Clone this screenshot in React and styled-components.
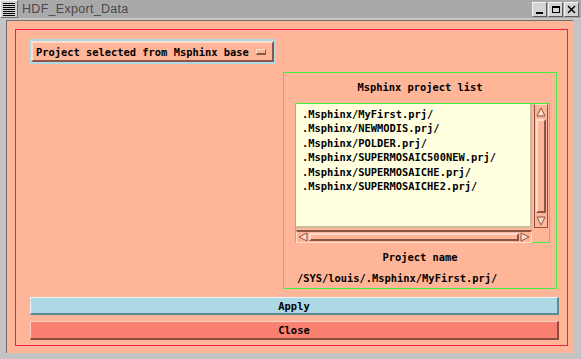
import React from "react";
import styled, { createGlobalStyle } from "styled-components";

const Global = createGlobalStyle`
  html, body { margin: 0; padding: 0; background: #ffffff; }
  body { width: 581px; height: 359px; overflow: hidden; }
`;

const SALMON = "#ffb598";
const DARK = "#8b5444";
const LIGHT = "#ffdccb";

const Window = styled.div`
  width: 581px;
  height: 359px;
  display: flex;
  flex-direction: column;
  background: #c4c4c4;
  box-sizing: border-box;
`;

const TitleBar = styled.div`
  height: 19px;
  display: flex;
  align-items: center;
  background: #a9a9a9;
  border-bottom: 1px solid #c8c8c8;
  box-sizing: border-box;
`;

const MenuBox = styled.div`
  width: 18px;
  height: 18px;
  box-sizing: border-box;
  background: #d2d2d2;
  border: 1px solid #f2f2f2;
  border-right-color: #6a6a6a;
  border-bottom-color: #6a6a6a;
  display: flex;
  flex-direction: column;
  justify-content: center;
  gap: 1px;
  padding: 0 2px;
`;

const MenuLine = styled.div`
  height: 1px;
  background: #000;
`;

const Title = styled.div`
  flex: 1;
  padding-left: 4px;
  font-family: "Liberation Sans", "DejaVu Sans", sans-serif;
  font-size: 12.5px;
  color: #4a4a4a;
  letter-spacing: 0.3px;
`;

const WinButtons = styled.div`
  display: flex;
  gap: 1px;
  padding-right: 2px;
`;

const WinBtn = styled.div`
  width: 15px;
  height: 15px;
  box-sizing: border-box;
  background: #d4d4d4;
  border: 1px solid #f4f4f4;
  border-right-color: #5c5c5c;
  border-bottom-color: #5c5c5c;
  display: flex;
  align-items: center;
  justify-content: center;
`;

const Frame = styled.div`
  flex: 1;
  display: flex;
  box-sizing: border-box;
  border-left: 6px solid #c4c4c4;
  border-right: 8px solid #c4c4c4;
  border-bottom: 6px solid #c4c4c4;
  border-top: 1px solid #c4c4c4;
`;

const Salmon = styled.div`
  flex: 1;
  background: ${SALMON};
  padding: 8px 5px 7px 8px;
  display: flex;
  border-left: 1px solid #707070;
  border-top: 1px solid #707070;
`;

const RedBox = styled.div`
  flex: 1;
  border: 1px solid #f0204c;
  padding: 9px 8px 5px 13px;
  display: flex;
  flex-direction: column;
`;

const TopRow = styled.div`
  display: flex;
  justify-content: space-between;
  align-items: flex-start;
`;

const mono = `
  font-family: "DejaVu Sans Mono", "Liberation Mono", monospace;
  font-weight: bold;
  font-size: 10.4px;
  color: #000;
`;

const DropOuter = styled.div`
  width: 247px;
  height: 25px;
  box-sizing: border-box;
  border: 2px solid #add8e6;
  display: flex;
`;

const DropButton = styled.div`
  flex: 1;
  box-sizing: border-box;
  background: ${SALMON};
  border: 2px solid ${LIGHT};
  border-right-color: ${DARK};
  border-bottom-color: ${DARK};
  display: flex;
  align-items: center;
  padding-left: 3px;
  ${mono}
`;

const DropText = styled.span`
  flex: 1;
  white-space: pre;
`;

const Indicator = styled.div`
  width: 10px;
  height: 6px;
  box-sizing: border-box;
  margin-right: 6px;
  background: ${SALMON};
  border: 1px solid ${LIGHT};
  border-right-color: ${DARK};
  border-bottom-color: ${DARK};
  border-bottom-width: 2px;
`;

const Panel = styled.div`
  margin-top: 33px;
  margin-right: 2px;
  width: 274px;
  height: 217px;
  box-sizing: border-box;
  border: 1px solid #44ee44;
  padding: 8px 6px 0 11px;
  display: flex;
  flex-direction: column;
`;

const Caption = styled.div`
  ${mono}
  line-height: 12px;
  text-align: center;
  margin-left: -5px;
  margin-top: ${(p) => p.$mt || 0}px;
`;

const ListWidget = styled.div`
  margin-top: 10px;
  width: 255px;
  height: 140px;
  box-sizing: border-box;
  border: 1px solid #44ee44;
  display: grid;
  grid-template-columns: 236px 1fr;
  grid-template-rows: 124px 1fr;
`;

const ListArea = styled.div`
  grid-column: 1;
  grid-row: 1;
  background: #ffffe0;
  border-right: 2px solid #c8bc9c;
  border-bottom: 2px solid #c8bc9c;
  padding: 3px 0 0 6px;
  box-sizing: border-box;
  overflow: hidden;
`;

const ListItem = styled.div`
  ${mono}
  line-height: 14.4px;
  white-space: pre;
`;

const VScroll = styled.div`
  grid-column: 2;
  grid-row: 1;
  margin: 0 1px 0 2px;
  box-sizing: border-box;
  border: 1px solid ${DARK};
  border-top-color: ${LIGHT};
  border-left-color: ${DARK};
  background: ${SALMON};
  display: flex;
  flex-direction: column;
`;

const HScroll = styled.div`
  grid-column: 1;
  grid-row: 2;
  margin-top: 2px;
  box-sizing: border-box;
  border: 1px solid ${LIGHT};
  border-top: 2px solid ${DARK};
  background: ${SALMON};
  display: flex;
  align-items: stretch;
`;

const ArrowBox = styled.div`
  display: flex;
  align-items: center;
  justify-content: center;
  ${(p) => (p.$vertical ? "height: 13px;" : "width: 12px;")}
`;

const Thumb = styled.div`
  flex: 1;
  box-sizing: border-box;
  background: ${SALMON};
  border: 2px solid ${LIGHT};
  border-right-color: ${DARK};
  border-bottom-color: ${DARK};
  ${(p) => (p.$vertical ? "margin: 1px 1px;" : "margin: 1px 0;")}
`;

const NameValue = styled.div`
  ${mono}
  margin-top: 9px;
  margin-left: 2px;
  line-height: 12px;
  white-space: pre;
`;

const ActionButton = styled.div`
  margin-left: 1px;
  width: 529px;
  height: ${(p) => p.$h}px;
  margin-top: ${(p) => p.$mt}px;
  box-sizing: border-box;
  background: ${(p) => p.$bg};
  border: 1px solid ${(p) => p.$light};
  border-bottom: 2px solid ${(p) => p.$dark};
  border-right: 2px solid ${(p) => p.$dark};
  display: flex;
  align-items: center;
  justify-content: center;
  ${mono}
`;

const items = [
  ".Msphinx/MyFirst.prj/",
  ".Msphinx/NEWMODIS.prj/",
  ".Msphinx/POLDER.prj/",
  ".Msphinx/SUPERMOSAIC500NEW.prj/",
  ".Msphinx/SUPERMOSAICHE.prj/",
  ".Msphinx/SUPERMOSAICHE2.prj/",
];

const Tri = ({ dir }) => {
  const pts = {
    up: "5,1 9,9 1,9",
    down: "1,1 9,1 5,9",
    left: "1,5 9,1 9,9",
    right: "1,1 9,5 1,9",
  }[dir];
  return (
    <svg width="10" height="10" viewBox="0 0 10 10">
      <polygon points={pts} fill={LIGHT} stroke={DARK} strokeWidth="1" />
    </svg>
  );
};

export default function App() {
  return (
    <>
      <Global />
      <Window>
        <TitleBar>
          <MenuBox>
            {Array.from({ length: 7 }).map((_, i) => (
              <MenuLine key={i} />
            ))}
          </MenuBox>
          <Title>HDF_Export_Data</Title>
          <WinButtons>
            <WinBtn>
              <svg width="11" height="11" viewBox="0 0 11 11">
                <rect x="2" y="8" width="7" height="2" fill="#000" />
              </svg>
            </WinBtn>
            <WinBtn>
              <svg width="11" height="11" viewBox="0 0 11 11">
                <rect x="2.5" y="2.5" width="7" height="6" fill="none" stroke="#000" />
                <rect x="2" y="2" width="8" height="2" fill="#000" />
              </svg>
            </WinBtn>
            <WinBtn>
              <svg width="11" height="11" viewBox="0 0 11 11">
                <path d="M2 2 L9 9 M9 2 L2 9" stroke="#000" strokeWidth="1.5" />
              </svg>
            </WinBtn>
          </WinButtons>
        </TitleBar>
        <Frame>
          <Salmon>
            <RedBox>
              <TopRow>
                <DropOuter>
                  <DropButton>
                    <DropText>Project selected from Msphinx base</DropText>
                    <Indicator />
                  </DropButton>
                </DropOuter>
                <Panel>
                  <Caption>Msphinx project list</Caption>
                  <ListWidget>
                    <ListArea>
                      {items.map((t) => (
                        <ListItem key={t}>{t}</ListItem>
                      ))}
                    </ListArea>
                    <VScroll>
                      <ArrowBox $vertical>
                        <Tri dir="up" />
                      </ArrowBox>
                      <Thumb $vertical />
                      <ArrowBox $vertical>
                        <Tri dir="down" />
                      </ArrowBox>
                    </VScroll>
                    <HScroll>
                      <ArrowBox>
                        <Tri dir="left" />
                      </ArrowBox>
                      <Thumb />
                      <ArrowBox>
                        <Tri dir="right" />
                      </ArrowBox>
                    </HScroll>
                  </ListWidget>
                  <Caption $mt={8}>Project name</Caption>
                  <NameValue>/SYS/louis/.Msphinx/MyFirst.prj/</NameValue>
                </Panel>
              </TopRow>
              <ActionButton $h={18} $mt={8} $bg="#add8e6" $light="#e4f4f8" $dark="#5f8a94">
                Apply
              </ActionButton>
              <ActionButton $h={19} $mt={6} $bg="#fa8072" $light="#ffd0c4" $dark="#8c4a40">
                Close
              </ActionButton>
            </RedBox>
          </Salmon>
        </Frame>
      </Window>
    </>
  );
}
